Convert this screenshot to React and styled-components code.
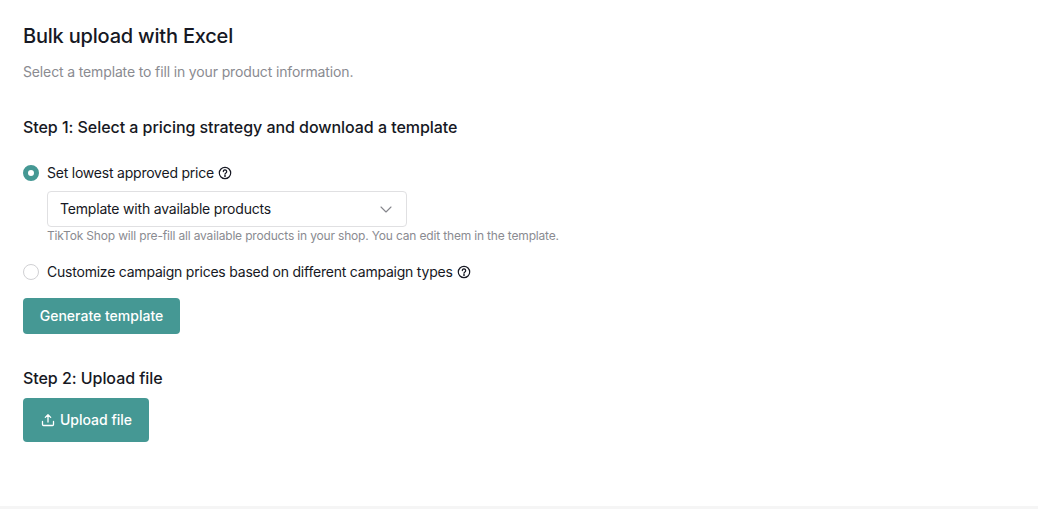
import styled, { createGlobalStyle } from 'styled-components';

const GlobalStyle = createGlobalStyle`
	html, body {
		margin: 0;
		padding: 0;
		background: #f5f5f5;
	}
	body {
		font-family: Inter, "Noto Sans", sans-serif;
		color: #161823;
	}
`;

const Page = styled.div`
	height: 506px;
	padding: 24px 23px 0;
	box-sizing: border-box;
	background: #fff;
	overflow: hidden;
`;
const Title = styled.h1`
	margin: 0;
	font-size: 20px;
	line-height: 24px;
	font-weight: 500;
	letter-spacing: -0.2px;
`;
const Subtitle = styled.p`
	margin: 14px 0 0;
	font-size: 14px;
	line-height: 20px;
	letter-spacing: -0.14px;
	color: #8a8b91;
`;
const StepTitle = styled.h2`
	margin: ${(props) => props.$top}px 0 0;
	font-size: 16px;
	line-height: 24px;
	font-weight: 500;
	letter-spacing: -0.05px;
`;
const RadioRow = styled.label`
	display: flex;
	align-items: center;
	gap: 8px;
	height: 22px;
	margin-top: ${(props) => props.$top}px;
	font-size: 14px;
	letter-spacing: -0.22px;
`;
const RadioText = styled.span`
	margin-bottom: 2px;
`;
const RadioMark = styled.span`
	width: 16px;
	height: 16px;
	box-sizing: border-box;
	border-radius: 50%;
	background: #fff;
	border: ${(props) => (props.$checked ? '5px solid #459894' : '1px solid #d0d0d3')};
`;
const Hint = styled.svg`
	width: 14px;
	height: 14px;
	margin-left: -4px;
`;
const Indent = styled.div`
	margin-left: 24px;
`;
const Select = styled.div`
	display: flex;
	align-items: center;
	justify-content: space-between;
	width: 360px;
	height: 36px;
	box-sizing: border-box;
	margin-top: 7px;
	padding: 0 14px 2px 12px;
	border: 1px solid #e0e0e2;
	border-radius: 4px;
	font-size: 14px;
	letter-spacing: -0.19px;
`;
const Chevron = styled.svg`
	margin-top: 2px;
`;
const Note = styled.div`
	margin-top: 1px;
	font-size: 12px;
	line-height: 16px;
	letter-spacing: -0.17px;
	color: #8a8b91;
`;
const Button = styled.button`
	display: flex;
	align-items: center;
	justify-content: center;
	gap: 4px;
	width: ${(props) => props.$width}px;
	height: ${(props) => props.$height}px;
	margin-top: ${(props) => props.$top}px;
	padding: 0 0 2px;
	border: 0;
	border-radius: 4px;
	background: #459894;
	color: #fff;
	font-family: inherit;
	font-size: 14px;
	font-weight: 500;
`;
const UploadIcon = styled.svg`
	margin-top: 2px;
`;

const HintIcon = () => (
	<Hint viewBox="0 0 14 14" fill="none" stroke="#161823" strokeWidth="1.2" strokeLinecap="round">
		<circle cx="7" cy="7" r="5.7" />
		<path d="M5.3 5.6a1.7 1.7 0 1 1 2.6 1.45c-.55.35-.9.65-.9 1.25" />
		<circle cx="7" cy="10" r="0.35" fill="#161823" />
	</Hint>
);

const App = () => (
	<>
		<GlobalStyle />
		<Page>
			<Title>Bulk upload with Excel</Title>
			<Subtitle>Select a template to fill in your product information.</Subtitle>
			<StepTitle $top={33}>Step 1: Select a pricing strategy and download a template</StepTitle>
			<RadioRow $top={23}>
				<RadioMark $checked />
				<RadioText>Set lowest approved price</RadioText>
				<HintIcon />
			</RadioRow>
			<Indent>
				<Select>
					Template with available products
					<Chevron width="12" height="12" viewBox="0 0 12 12" fill="none" stroke="#85868c" strokeWidth="1.1" strokeLinecap="round" strokeLinejoin="round">
						<path d="M1 4l5 5 5-5" />
					</Chevron>
				</Select>
				<Note>TikTok Shop will pre-fill all available products in your shop. You can edit them in the template.</Note>
			</Indent>
			<RadioRow $top={17}>
				<RadioMark />
				<RadioText>Customize campaign prices based on different campaign types</RadioText>
				<HintIcon />
			</RadioRow>
			<Button $width={157} $height={36} $top={15}>Generate template</Button>
			<StepTitle $top={32}>Step 2: Upload file</StepTitle>
			<Button $width={126} $height={44} $top={8}>
				<UploadIcon width="16" height="16" viewBox="0 0 16 16" fill="none" stroke="#fff" strokeWidth="1.3" strokeLinecap="round" strokeLinejoin="round">
					<path d="M8 10V3M5.3 5.4L8 2.7l2.7 2.7M2.5 9.5v3a1 1 0 0 0 1 1h9a1 1 0 0 0 1-1v-3" />
				</UploadIcon>
				Upload file
			</Button>
		</Page>
	</>
);

export default App;
